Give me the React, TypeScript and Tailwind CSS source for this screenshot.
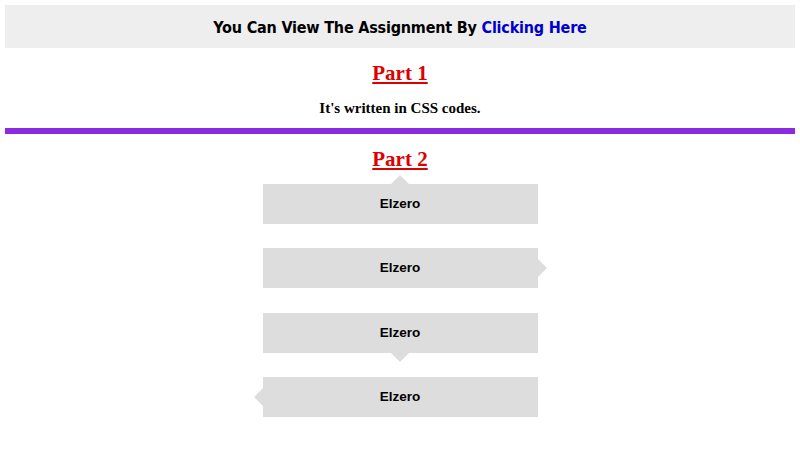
import React from 'react';

type Side = 'top' | 'right' | 'bottom' | 'left';

const arrowClass: Record<Side, string> = {
  top: 'left-1/2 -translate-x-1/2 bottom-full border-x-[9px] border-b-[9px] border-x-transparent border-b-[#dddddd]',
  right: 'top-1/2 -translate-y-1/2 left-full border-y-[9px] border-l-[9px] border-y-transparent border-l-[#dddddd]',
  bottom: 'left-1/2 -translate-x-1/2 top-full border-x-[9px] border-t-[9px] border-x-transparent border-t-[#dddddd]',
  left: 'top-1/2 -translate-y-1/2 right-full border-y-[9px] border-r-[9px] border-y-transparent border-r-[#dddddd]'
};

const Bubble: React.FC<{ side: Side }> = ({ side }) => (
  <div className="relative mx-auto flex h-[40px] w-[275px] items-center justify-center bg-[#dddddd] text-[13.5px] font-bold text-black [font-family:'Liberation_Sans',Arial,sans-serif]">
    Elzero
    <span className={`absolute h-0 w-0 ${arrowClass[side]}`} />
  </div>
);

const App: React.FC = () => {
  const sides: Side[] = ['top', 'right', 'bottom', 'left'];

  return (
    <div className="min-h-[450px] bg-white p-[5px]">
      <div className="flex h-[43px] items-center justify-center bg-[#eeeeee] pt-[2px] text-[16px] font-bold text-black [font-family:'DejaVu_Sans_Condensed','DejaVu_Sans',sans-serif] tracking-[-0.2px]">
        You Can View The Assignment By&nbsp;<a href="#" className="text-[#0000cc]">Clicking Here</a>
      </div>

      <div className="[font-family:'Liberation_Serif','Times_New_Roman',serif]">
        <h2 className="mt-[12px] text-center text-[21px] font-bold leading-[26px] text-[#dd0000] underline">Part 1</h2>
        <p className="mt-[12px] text-center text-[15px] font-bold leading-[20px] text-black">It's written in CSS codes.</p>
      </div>

      <div className="mt-[10px] h-[6px] bg-[#8a2be2]" />

      <h2 className="mt-[12px] text-center text-[21px] font-bold leading-[26px] text-[#dd0000] underline [font-family:'Liberation_Serif','Times_New_Roman',serif]">
        Part 2
      </h2>

      <div className="mt-[12px] flex flex-col gap-[24.33px]">
        {sides.map((side) => (
          <Bubble key={side} side={side} />
        ))}
      </div>
    </div>
  );
};

export default App;
